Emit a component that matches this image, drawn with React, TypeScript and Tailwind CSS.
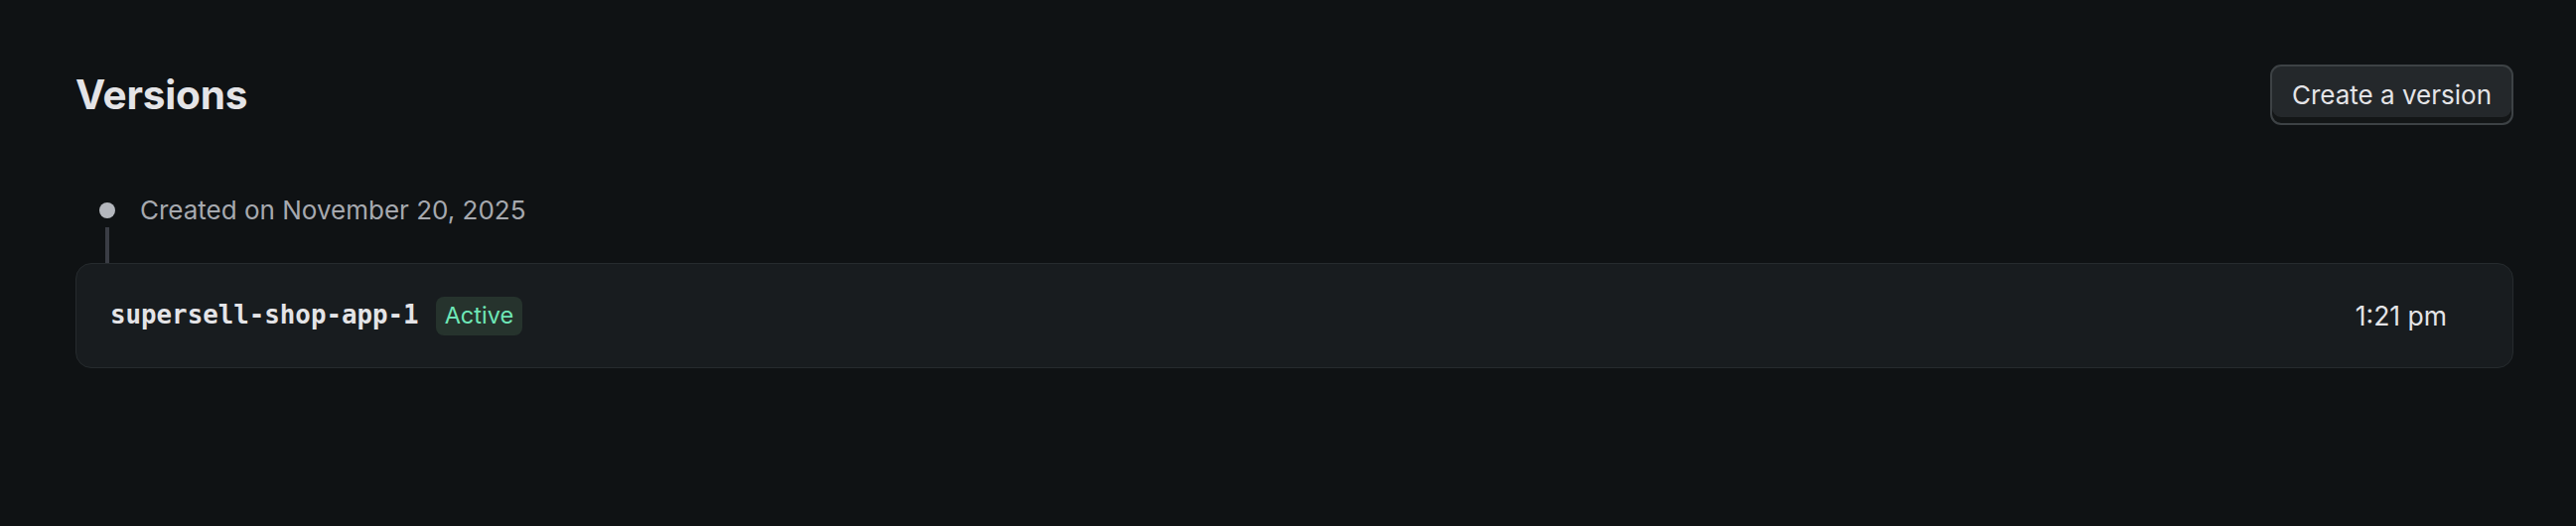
import React from "react";

export default function App() {
  return (
    <div
      className="min-h-[530px] w-full bg-[#0f1214] pl-[76px] pr-[63px] pt-[65px]"
      style={{ fontFamily: "Inter, 'Noto Sans', sans-serif" }}
    >
      <div className="flex items-center justify-between">
        <h1 className="text-[40.5px] font-bold leading-[50px] tracking-[-0.2px] text-[#e4e4e7]">
          Versions
        </h1>
        <button className="h-[61px] rounded-[11px] border-[2px] border-[#3d4245] bg-[#24282b] px-[20px] text-[26px] leading-none text-[#e4e4e7] shadow-[inset_0_-6px_0_rgba(0,0,0,0.45)]">
          Create a version
        </button>
      </div>

      <div className="mt-[69px] flex flex-col">
        <div className="flex h-[34px] items-center">
          <div className="ml-[24px] h-[16px] w-[16px] rounded-full bg-[#b4b7bd]" />
          <span className="ml-[25px] text-[26px] leading-[34px] text-[#a6a9af]">
            Created on November 20, 2025
          </span>
        </div>
        <div className="ml-[30px] h-[36px] w-[4px] bg-[#3a3d45]" />
        <div className="flex h-[106px] items-center justify-between rounded-[16px] border border-[#262b2e] bg-[#181c1f] pl-[34px] pr-[66px]">
          <div className="flex items-center">
            <span
              className="text-[25.8px] font-bold leading-none text-[#e4e4e7]"
              style={{ fontFamily: "'DejaVu Sans Mono', 'Liberation Mono', monospace" }}
            >
              supersell-shop-app-1
            </span>
            <span className="ml-[17px] flex h-[39px] items-center rounded-[8px] bg-[#26332d] px-[9px] text-[23.5px] leading-none text-[#6ee7b7]">
              Active
            </span>
          </div>
          <span className="text-[26.5px] leading-none text-[#e4e4e7]">1:21 pm</span>
        </div>
      </div>
    </div>
  );
}
